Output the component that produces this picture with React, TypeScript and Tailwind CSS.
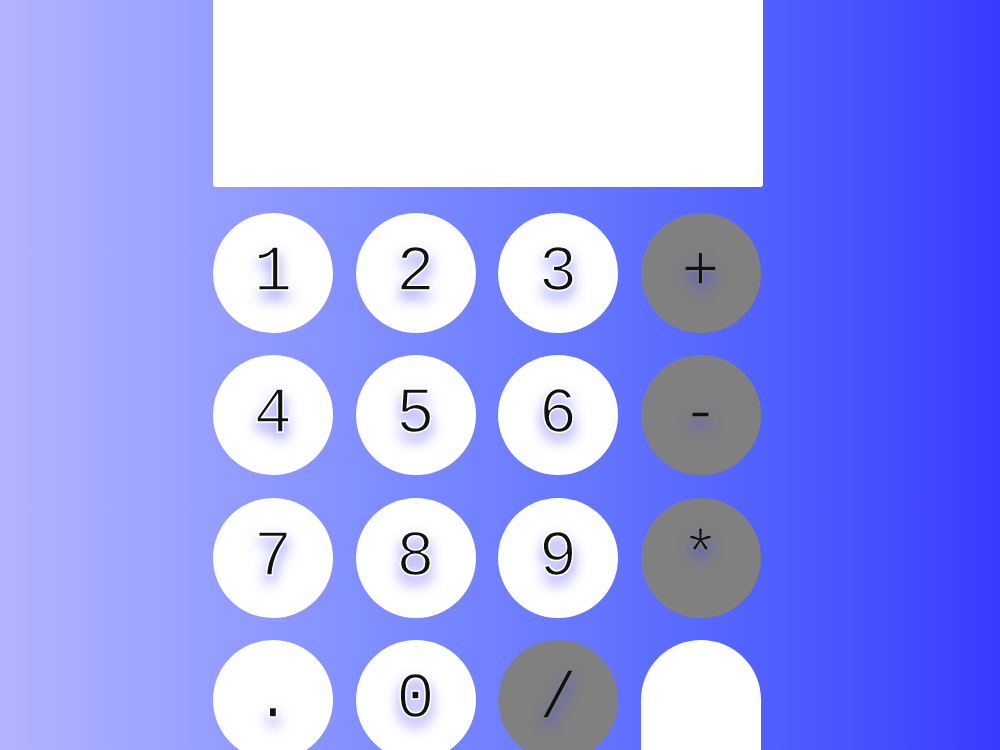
import React from 'react';

const keys: { label: string; op?: boolean }[] = [
  { label: '1' }, { label: '2' }, { label: '3' }, { label: '+', op: true },
  { label: '4' }, { label: '5' }, { label: '6' }, { label: '-', op: true },
  { label: '7' }, { label: '8' }, { label: '9' }, { label: '*', op: true },
  { label: '.' }, { label: '0' }, { label: '/', op: true },
];

export default function App() {
  return (
    <div className="w-[1000px] h-[750px] overflow-hidden bg-gradient-to-r from-[#b3b3ff] to-[#3a3aff]">
      <div className="pl-[213px] flex flex-col">
        <div className="w-[550px] h-[187px] bg-white rounded-b-[3px]" />
        <div className="mt-[26px] grid grid-cols-[repeat(4,120px)] auto-rows-[120px] gap-x-[22.5px] gap-y-[22.3px]">
          {keys.map((k) => (
            <button
              key={k.label}
              className={`w-[120px] h-[120px] rounded-full flex items-center justify-center text-[64px] leading-none text-[#111] font-['Liberation_Mono',monospace] [text-shadow:0_8px_14px_rgba(70,70,255,0.75)] ${
                k.op
                  ? 'bg-[#808080] [-webkit-text-stroke:1.5px_#808080]'
                  : 'bg-white [-webkit-text-stroke:1.5px_#ffffff]'
              }`}
            >
              {k.label}
            </button>
          ))}
          <button className="row-span-2 w-[120px] h-[262px] rounded-full bg-white flex items-end justify-center pb-[40px] text-[64px] leading-none text-[#111] font-['Liberation_Mono',monospace]">
            =
          </button>
        </div>
      </div>
    </div>
  );
}
